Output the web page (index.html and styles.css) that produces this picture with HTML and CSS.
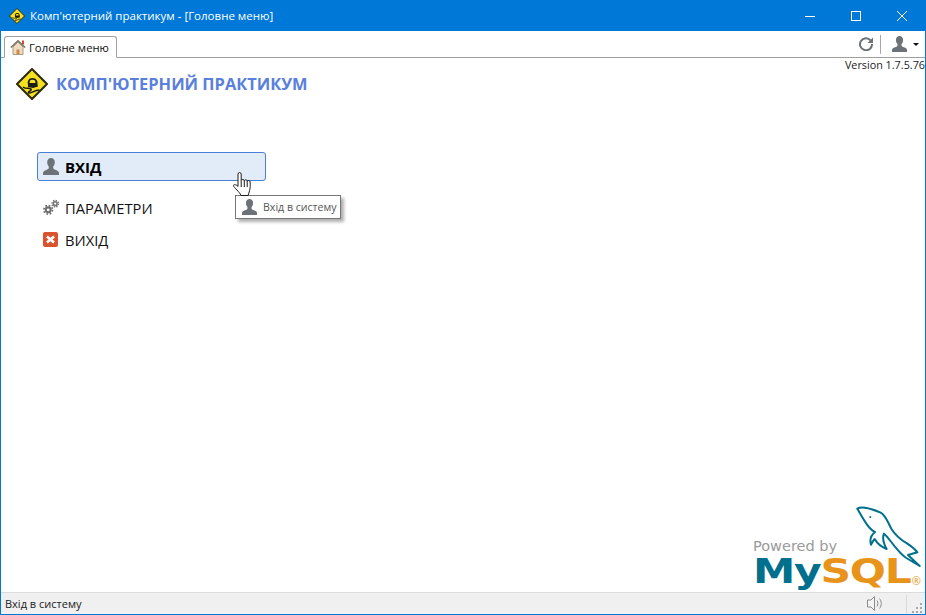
FILE: index.html
```html
<!DOCTYPE html>
<html lang="uk">
<head>
<meta charset="utf-8">
<title>Комп'ютерний практикум</title>
<link rel="stylesheet" href="styles.css">
</head>
<body>
<svg class="defs" width="0" height="0">
  <defs>
    <symbol id="user" viewBox="0 0 16 17"><path d="M8 0C5.600 0 4.200 1.800 4.200 4.200c0 1.900.7 3.400 1.600 4.400v1.400c0 .9-1 1.300-2.600 1.900C1.500 12.600 0 13.200 0 15v2h16v-2c0-1.800-1.500-2.400-3.200-3.100-1.600-.6-2.600-1-2.600-1.900V8.600c.9-1 1.600-2.500 1.600-4.400C11.800 1.800 10.400 0 8 0z"/></symbol>
    <symbol id="sign" viewBox="0 0 32 32">
      <path d="M16 1 31 16 16 31 1 16z" fill="#f5e020" stroke="#2a2a10" stroke-width="2" stroke-linejoin="round"/>
      <path d="M12 16.500c-1-3 .5-6.500 4.500-6.500s5.500 3 5 6.500l.5 2-5 1.500-5-1z" fill="#1c1c10"/>
      <path d="M14 12.500c1-1 4-1 5 0l.5 2.500h-6z" fill="#f5e020"/>
      <path d="M7 19c3 2.500 6 .5 8 2 1.500 1.500-3.500 2.500-2.500 4 1.500 1 6-3 11-3" fill="none" stroke="#1c1c10" stroke-width="1.500"/>
    </symbol>
  </defs>
</svg>
<div class="window">
  <header class="titlebar">
    <svg class="title-icon"><use href="#sign"/></svg>
    <span class="title-text">Комп'ютерний практикум - [Головне меню]</span>
    <div class="controls">
      <span class="ctl"><svg width="10" height="10" viewBox="0 0 10 10"><path d="M0 5.500h10" stroke="#fff" fill="none"/></svg></span>
      <span class="ctl"><svg width="10" height="10" viewBox="0 0 10 10"><rect x=".5" y=".5" width="9" height="9" stroke="#fff" fill="none"/></svg></span>
      <span class="ctl"><svg width="10" height="10" viewBox="0 0 10 10"><path d="M0 0l10 10M10 0L0 10" stroke="#fff" fill="none"/></svg></span>
    </div>
  </header>
  <div class="tabbar">
    <div class="tab">
      <svg class="tab-icon" viewBox="0 0 16 16">
        <path d="M12 1.500h2v4h-2z" fill="#d9482b"/>
        <path d="M3 8v7.500h10V8L8 3z" fill="#efdcc0" stroke="#a89880"/>
        <path d="M6.500 15.500v-5h3v5z" fill="#c98a50"/>
        <path d="M.8 8.500 8 1.800l7.200 6.700" fill="none" stroke="#77736c" stroke-width="1.500"/>
      </svg>
      <span>Головне меню</span>
    </div>
    <div class="tools">
      <svg class="refresh" viewBox="0 0 14 14"><path d="M11.600 3.400A6 6 0 1 0 13 7" fill="none" stroke="#6d7278" stroke-width="2"/><path d="M14 .5v5.500H8.500z" fill="#6d7278"/></svg>
      <span class="tool-sep"></span>
      <svg class="tool-user"><use href="#user"/></svg>
      <span class="caret"></span>
    </div>
  </div>
  <main class="content">
    <div class="version">Version 1.7.5.76</div>
    <div class="brand">
      <svg class="brand-icon"><use href="#sign"/></svg>
      <h1 class="brand-text">КОМП'ЮТЕРНИЙ ПРАКТИКУМ</h1>
    </div>
    <nav class="menu">
      <div class="item item-active">
        <svg class="item-icon user-icon"><use href="#user"/></svg>
        <span>ВХІД</span>
      </div>
      <div class="item">
        <svg class="item-icon" viewBox="0 0 17 17">
          <g fill="none" stroke="#6f6f6f">
            <circle cx="5.500" cy="11" r="2.600" stroke-width="2.200"/>
            <circle cx="5.500" cy="11" r="4.600" stroke-width="1.800" stroke-dasharray="1.800 1.810"/>
            <circle cx="13" cy="4.500" r="2" stroke-width="1.600"/>
            <circle cx="13" cy="4.500" r="3.500" stroke-width="1.500" stroke-dasharray="1.400 1.350"/>
          </g>
        </svg>
        <span>ПАРАМЕТРИ</span>
      </div>
      <div class="item">
        <svg class="item-icon" viewBox="0 0 16 16">
          <rect width="15" height="15" y=".5" rx="2" fill="#d9542e"/>
          <path d="M4 5 11 11M11 5 4 11" stroke="#fff" stroke-width="2.600"/>
        </svg>
        <span>ВИХІД</span>
      </div>
    </nav>
    <div class="tooltip">
      <svg class="tip-icon"><use href="#user"/></svg>
      <span>Вхід в систему</span>
    </div>
    <svg class="hand" viewBox="0 0 19 25">
      <path d="M5 2c0-1.900 3.200-1.900 3.200 0v6.500c.4-1.400 3-1.400 3.100.2.400-1.200 2.800-1.200 2.900.3.600-1 2.800-.8 2.900.9.300 3.200.2 6-.5 8.500-.5 2-1 3.600-1.500 5.100H8c-.6-2-2.400-3.600-4-5.500C2.600 16.300.4 15 .5 13.500c.2-1.500 2.800-1 4.500.9z" fill="#fff" stroke="#1a1a1a"/>
      <path d="M8.200 8.500V15M11.300 8.700V15M14.200 9v6" stroke="#1a1a1a" fill="none"/>
    </svg>
    <div class="mysql">
      <svg class="dolphin" viewBox="0 0 228 270">
        <path d="M25 20C40 10 68 20 95 32c15 8 22 30 32 48 12 20 28 33 48 45 12 8 24 18 30 26l-28 8 35 33-40-24c-15-10-25-24-35-35-10-12-20-28-32-38-5 12 0 32 8 46-15-6-28-16-36-30-5 5-8 12-11 17-5-18 2-30 12-38C60 82 45 55 25 20z" fill="none" stroke="#00708c" stroke-width="6" stroke-linejoin="round"/>
        <circle cx="64" cy="45" r="3" fill="#00708c"/>
      </svg>
      <div class="powered">Powered by</div>
      <div class="mysql-word"><span class="my">My</span><span class="sql">SQL</span></div>
      <div class="reg">®</div>
    </div>
  </main>
  <footer class="statusbar">
    <span class="status-text">Вхід в систему</span>
    <svg class="speaker" viewBox="0 0 17 17"><path d="M1.500 5h3.500l3.500-3.500v14L5 12H1.500z" fill="#f4f4f4" stroke="#8a8a8a"/><path d="M11 5.500c1.200 1.800 1.200 4.200 0 6M13.500 3.500c2.400 3 2.400 7 0 10" fill="none" stroke="#8a8a8a"/></svg>
    <span class="status-sep"></span>
    <span class="grip"><i></i><i></i><i></i><i></i><i></i><i></i></span>
  </footer>
</div>
</body>
</html>
```

FILE: styles.css
```css
* { box-sizing: border-box; }
html, body { margin: 0; padding: 0; }
body { font-family: "Open Sans", "Noto Sans", sans-serif; background: #fff; overflow: hidden; }
.defs { display: block; height: 0; }
.window { width: 926px; height: 615px; border: 1px solid #0078d7; border-top: 0; display: flex; flex-direction: column; background: #fff; }

.titlebar { height: 31px; background: #0078d7; color: #fff; display: flex; align-items: center; padding-left: 8px; flex: none; }
.title-icon { width: 16px; height: 16px; flex: none; }
.title-text { margin-left: 5px; font-size: 11.500px; }
.controls { margin-left: auto; display: flex; }
.ctl { width: 46px; height: 31px; display: flex; align-items: center; justify-content: center; }
.ctl svg { display: block; }

.tabbar { height: 27px; flex: none; border-bottom: 1px solid #a0a0a0; display: flex; align-items: flex-end; padding-left: 3px; position: relative; }
.tab { width: 113px; height: 22px; margin-bottom: -1px; border: 1px solid #a0a0a0; border-bottom: 1px solid #fff; border-radius: 3px 3px 0 0; background: #fff; display: flex; align-items: center; padding-left: 5px; gap: 3px; font-size: 11.300px; color: #111; }
.tab-icon { width: 16px; height: 16px; flex: none; }
.tools { margin-left: auto; height: 26px; display: flex; align-items: center; padding-right: 6px; }
.refresh { width: 14px; height: 14px; }
.tool-sep { width: 1px; height: 19px; background: #a8a8a8; margin: 0 11px 0 7px; }
.tool-user { width: 15px; height: 16px; fill: #6d7278; }
.caret { width: 0; height: 0; border: 3px solid transparent; border-top: 3px solid #111; border-bottom: 0; margin-left: 6px; }

.content { flex: 1; position: relative; display: flex; flex-direction: column; min-height: 0; }
.version { position: absolute; right: 0; top: 0; font-size: 10.800px; line-height: 14px; color: #222; }
.brand { display: flex; align-items: center; margin: 10px 0 0 15px; height: 32px; }
.brand-icon { width: 32px; height: 32px; flex: none; }
.brand-text { margin: 0 0 2px 8px; font-size: 16.400px; font-weight: 700; color: #5a80dc; white-space: nowrap; }

.menu { margin: 52px 0 0 36px; width: 229px; display: flex; flex-direction: column; }
.item { height: 29px; display: flex; align-items: center; padding-left: 6px; gap: 6px; font-size: 14.700px; color: #111; margin-bottom: 3px; }
.item-active { border: 1px solid #4a7fd8; border-radius: 3px; background: #e2ecf8; padding-left: 5px; font-weight: 700; font-size: 15px; color: #000; margin-bottom: 12px; }
.item-icon { width: 16px; height: 17px; flex: none; }
.user-icon { fill: #6d7278; }

.tooltip { position: absolute; left: 234px; top: 137px; width: 106px; height: 24px; background: #fff; border: 1px solid #767676; box-shadow: 3px 3px 3px #b0b0b0; display: flex; align-items: center; padding-left: 6px; gap: 6px; font-size: 10.600px; color: #575757; white-space: nowrap; }
.tip-icon { width: 15px; height: 16px; fill: #6d7278; flex: none; }
.hand { position: absolute; left: 232px; top: 114px; width: 19px; height: 25px; }

.mysql { position: relative; margin-top: auto; align-self: flex-end; width: 172px; height: 90px; flex: none; }
.dolphin { position: absolute; right: 0; top: 0; width: 76px; height: 90px; }
.powered { position: absolute; left: 0; top: 36px; font-family: "DejaVu Sans", sans-serif; font-size: 14.500px; color: #9a9a9a; line-height: 17px; white-space: nowrap; }
.mysql-word { position: absolute; left: 0; top: 54px; line-height: 31px; font-family: "DejaVu Sans", sans-serif; font-weight: 700; font-size: 34px; white-space: nowrap; letter-spacing: -1px; transform: scaleX(1.250); transform-origin: left center; }
.my { color: #00708c; }
.sql { color: #e8941a; }
.reg { position: absolute; right: 4px; top: 72px; color: #e8941a; font-size: 11px; line-height: 13px; }

.statusbar { height: 22px; flex: none; background: #f0f0f0; border-top: 1px solid #dcdcdc; display: flex; align-items: center; padding-left: 4px; font-size: 11px; color: #222; }
.status-text { flex: 1; }
.speaker { width: 17px; height: 17px; margin-right: 23px; }
.status-sep { width: 1px; height: 18px; background: #d8d8d8; margin-right: 5px; }
.grip { width: 10px; height: 10px; display: grid; grid-template-columns: repeat(3, 2px); grid-template-rows: repeat(3, 2px); gap: 2px; margin-right: 3px; align-self: flex-end; margin-bottom: 1px; }
.grip i { background: #a8a8a8; }
.grip i:nth-child(1) { grid-column: 3; grid-row: 1; }
.grip i:nth-child(2) { grid-column: 2; grid-row: 2; }
.grip i:nth-child(3) { grid-column: 3; grid-row: 2; }
.grip i:nth-child(4) { grid-column: 1; grid-row: 3; }
.grip i:nth-child(5) { grid-column: 2; grid-row: 3; }
.grip i:nth-child(6) { grid-column: 3; grid-row: 3; }
```
